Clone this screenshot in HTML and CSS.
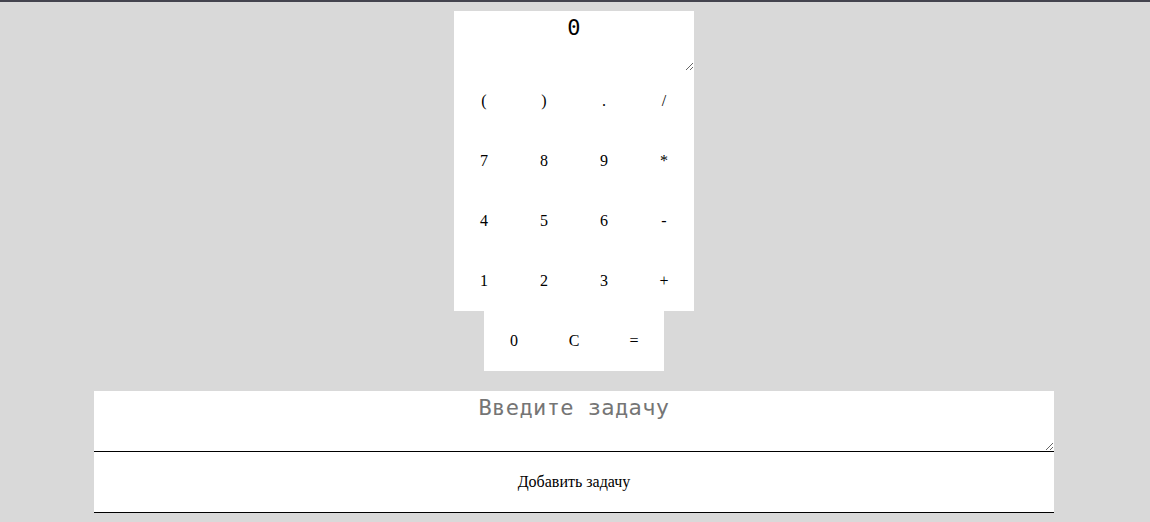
FILE: index.html
```html
<!DOCTYPE html>
<html lang="ru">
<head>
<meta charset="utf-8">
<title>Калькулятор</title>
<link rel="stylesheet" href="styles.css">
</head>
<body>
<div class="page">
  <div class="calc">
    <textarea class="calc-display">0</textarea>
    <div class="keys">
      <button class="key">(</button>
      <button class="key">)</button>
      <button class="key">.</button>
      <button class="key">/</button>
      <button class="key">7</button>
      <button class="key">8</button>
      <button class="key">9</button>
      <button class="key">*</button>
      <button class="key">4</button>
      <button class="key">5</button>
      <button class="key">6</button>
      <button class="key">-</button>
      <button class="key">1</button>
      <button class="key">2</button>
      <button class="key">3</button>
      <button class="key">+</button>
      <button class="key">0</button>
      <button class="key">C</button>
      <button class="key">=</button>
    </div>
  </div>
  <div class="tasks">
    <textarea class="task-input" placeholder="Введите задачу"></textarea>
    <button class="task-add">Добавить задачу</button>
  </div>
</div>
</body>
</html>
```
FILE: styles.css
```css
html {
  background: #d9d9d9;
  border-top: 2px solid #44444e;
}
body {
  margin: 0;
  background: #d9d9d9;
  font-family: "Liberation Serif", "Times New Roman", serif;
}
.page {
  padding: 9px 2px 0 0;
  display: flex;
  flex-direction: column;
  align-items: center;
  gap: 20px;
}
.calc {
  width: 240px;
  display: flex;
  flex-direction: column;
}
.calc-display,
.task-input {
  display: block;
  box-sizing: border-box;
  margin: 0;
  border: none;
  outline: none;
  background: #fff;
  text-align: center;
  font-family: "DejaVu Sans Mono", monospace;
  font-size: 22px;
  letter-spacing: 0.4px;
  color: #000;
  padding: 2px;
}
.calc-display {
  width: 240px;
  height: 60px;
  padding-top: 4px;
}
.keys {
  display: flex;
  flex-wrap: wrap;
  justify-content: center;
}
.key {
  width: 60px;
  height: 60px;
  margin: 0;
  padding: 0;
  border: none;
  background: #fff;
  font-family: "Liberation Serif", "Times New Roman", serif;
  font-size: 16px;
  color: #000;
}
.tasks {
  width: 960px;
  display: flex;
  flex-direction: column;
}
.task-input {
  width: 960px;
  height: 61px;
  border-bottom: 1px solid #000;
  padding-top: 4px;
}
.task-input::placeholder {
  color: #757575;
}
.task-add {
  box-sizing: border-box;
  width: 960px;
  height: 61px;
  margin: 0;
  padding: 0;
  border: none;
  border-bottom: 1px solid #000;
  background: #fff;
  font-family: "Liberation Serif", "Times New Roman", serif;
  font-size: 16px;
  color: #000;
}
```
